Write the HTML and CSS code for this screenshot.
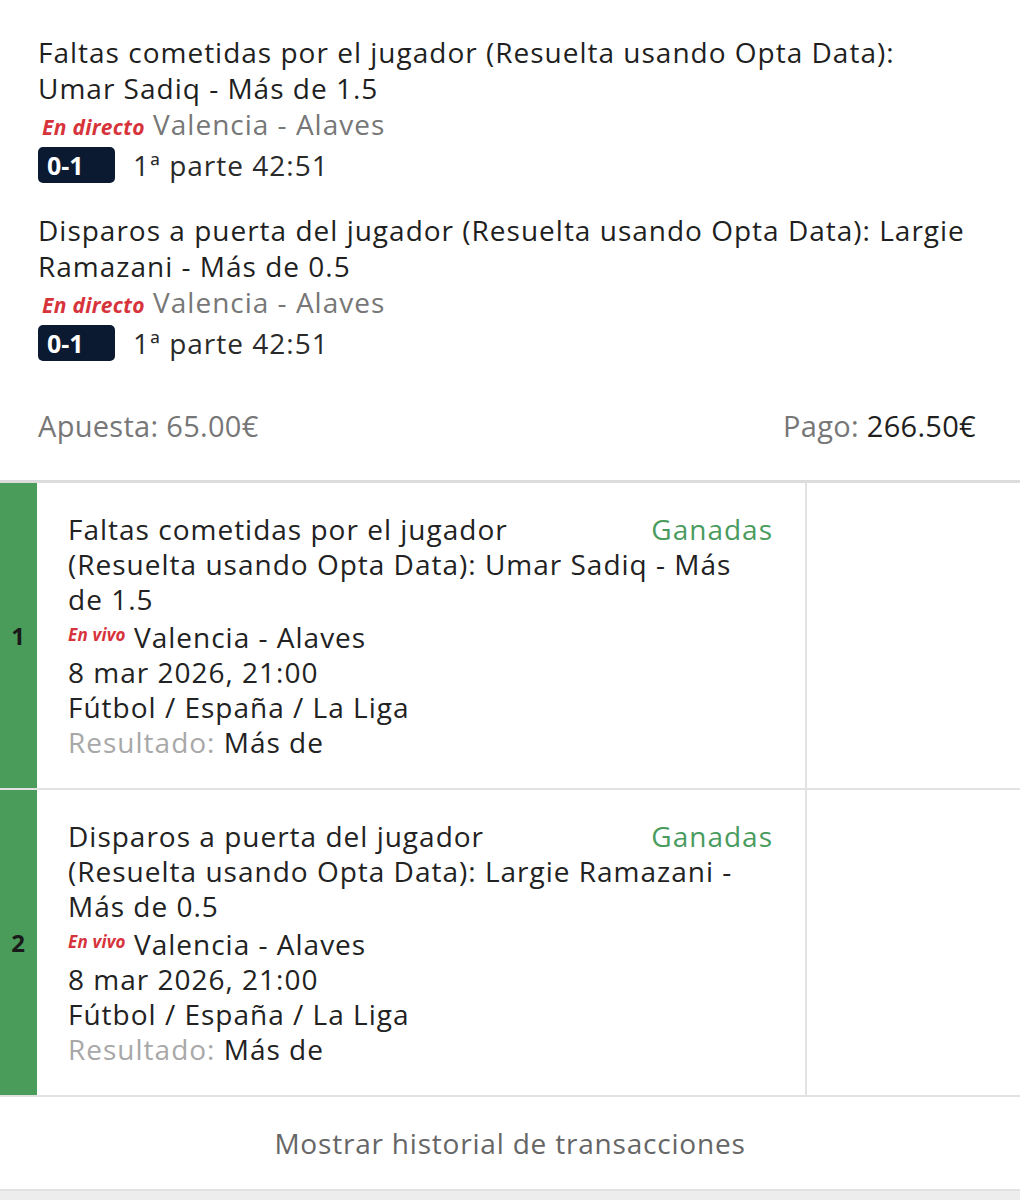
FILE: index.html
```html
<!DOCTYPE html>
<html lang="es">
<head>
  <meta charset="UTF-8" />
  <meta name="viewport" content="width=device-width, initial-scale=1" />
  <title>Apuesta combinada</title>
  <link rel="stylesheet" href="styles.css">
</head>
<body>
  <!-- Bet summary card -->
  <div class="bet-card">
    <div class="selection">
      <p class="selection-title">Faltas cometidas por el jugador (Resuelta usando Opta Data): Umar Sadiq - Más de 1.5</p>
      <p class="event"><span class="live">En directo</span> Valencia - Alaves</p>
      <div class="score-row">
        <span class="score">0-1</span>
        <span class="period">1ª parte 42:51</span>
      </div>
    </div>

    <div class="selection">
      <p class="selection-title">Disparos a puerta del jugador (Resuelta usando Opta Data): Largie Ramazani - Más de 0.5</p>
      <p class="event"><span class="live">En directo</span> Valencia - Alaves</p>
      <div class="score-row">
        <span class="score">0-1</span>
        <span class="period">1ª parte 42:51</span>
      </div>
    </div>

    <div class="totals">
      <span>Apuesta: 65.00€</span>
      <span>Pago: <b>266.50€</b></span>
    </div>
  </div>

  <!-- Legs table -->
  <div class="legs">
    <div class="leg">
      <div class="leg-index">1</div>
      <div class="leg-body">
        <span class="leg-status">Ganadas</span>
        <p>Faltas cometidas por el jugador (Resuelta usando Opta Data): Umar Sadiq - Más de 1.5</p>
        <p><span class="live-small">En vivo</span> Valencia - Alaves</p>
        <p>8 mar 2026, 21:00</p>
        <p>Fútbol / España / La Liga</p>
        <p><span class="muted">Resultado:</span> Más de</p>
      </div>
      <div class="leg-side"></div>
    </div>

    <div class="leg">
      <div class="leg-index">2</div>
      <div class="leg-body">
        <span class="leg-status">Ganadas</span>
        <p>Disparos a puerta del jugador (Resuelta usando Opta Data): Largie Ramazani - Más de 0.5</p>
        <p><span class="live-small">En vivo</span> Valencia - Alaves</p>
        <p>8 mar 2026, 21:00</p>
        <p>Fútbol / España / La Liga</p>
        <p><span class="muted">Resultado:</span> Más de</p>
      </div>
      <div class="leg-side"></div>
    </div>
  </div>

  <div class="history">
    <a href="#" class="history-link">Mostrar historial de transacciones</a>
  </div>
  <div class="bottom-band"></div>
</body>
</html>
```

FILE: styles.css
```css
/* Page */
body {
  font-family: 'Open Sans', 'Noto Sans', sans-serif;
  font-size: 28px;
  letter-spacing: 1px;
  background: #ffffff;
  color: #1f1f1f;
  margin: 0;
  padding: 0;
}

p {
  margin: 0;
}

/* Bet summary card */
.bet-card {
  padding: 34px 44px 0 38px;
  border-bottom: 3px solid #dcdcdc;
}

.selection {
  margin-bottom: 28px;
}

.selection + .selection {
  margin-bottom: 0;
}

.selection-title {
  line-height: 36px;
}

.event {
  line-height: 37px;
  color: #777777;
}

.live {
  color: #d7333b;
  font-weight: 700;
  font-style: italic;
  font-size: 21px;
  letter-spacing: 0.3px;
  margin-left: 4px;
}

.score-row {
  display: flex;
  align-items: center;
  gap: 18px;
}

.score {
  display: inline-block;
  width: 77px;
  height: 36px;
  line-height: 36px;
  box-sizing: border-box;
  padding-left: 9px;
  background: #0b1a30;
  color: #ffffff;
  font-weight: 700;
  font-size: 25px;
  letter-spacing: 0;
  border-radius: 5px;
}

.period {
  color: #2a2a2a;
}

.totals {
  display: flex;
  justify-content: space-between;
  align-items: center;
  height: 70px;
  margin-top: 28px;
  padding-bottom: 20px;
  font-size: 29px;
  letter-spacing: 0.3px;
  color: #777777;
}

.totals b {
  font-weight: 400;
  color: #1f1f1f;
}

/* Legs */
.leg {
  display: flex;
  border-bottom: 2px solid #e2e2e2;
}

.leg-index {
  width: 37px;
  flex-shrink: 0;
  background: #4a9c5a;
  display: flex;
  align-items: center;
  justify-content: center;
  font-weight: 700;
  font-size: 24px;
  color: #1a1a1a;
}

.leg-body {
  width: 770px;
  box-sizing: border-box;
  padding: 29px 32px 28px 31px;
  border-right: 2px solid #e2e2e2;
  line-height: 35px;
  color: #222222;
}

.leg-status {
  float: right;
  margin-left: 44px;
  color: #4a9c5e;
}

.live-small {
  color: #d7333b;
  font-style: italic;
  font-weight: 700;
  font-size: 17px;
  letter-spacing: 0.2px;
  vertical-align: 7px;
}

.muted {
  color: #a8a8a8;
}

.leg-side {
  flex: 1;
}

/* Footer */
.history {
  height: 92px;
  display: flex;
  align-items: center;
  justify-content: center;
  border-bottom: 2px solid #e2e2e2;
}

.history-link {
  font-size: 28px;
  letter-spacing: 0.8px;
  color: #666666;
  text-decoration: none;
}

.bottom-band {
  height: 20px;
  background: #ededed;
}
```
